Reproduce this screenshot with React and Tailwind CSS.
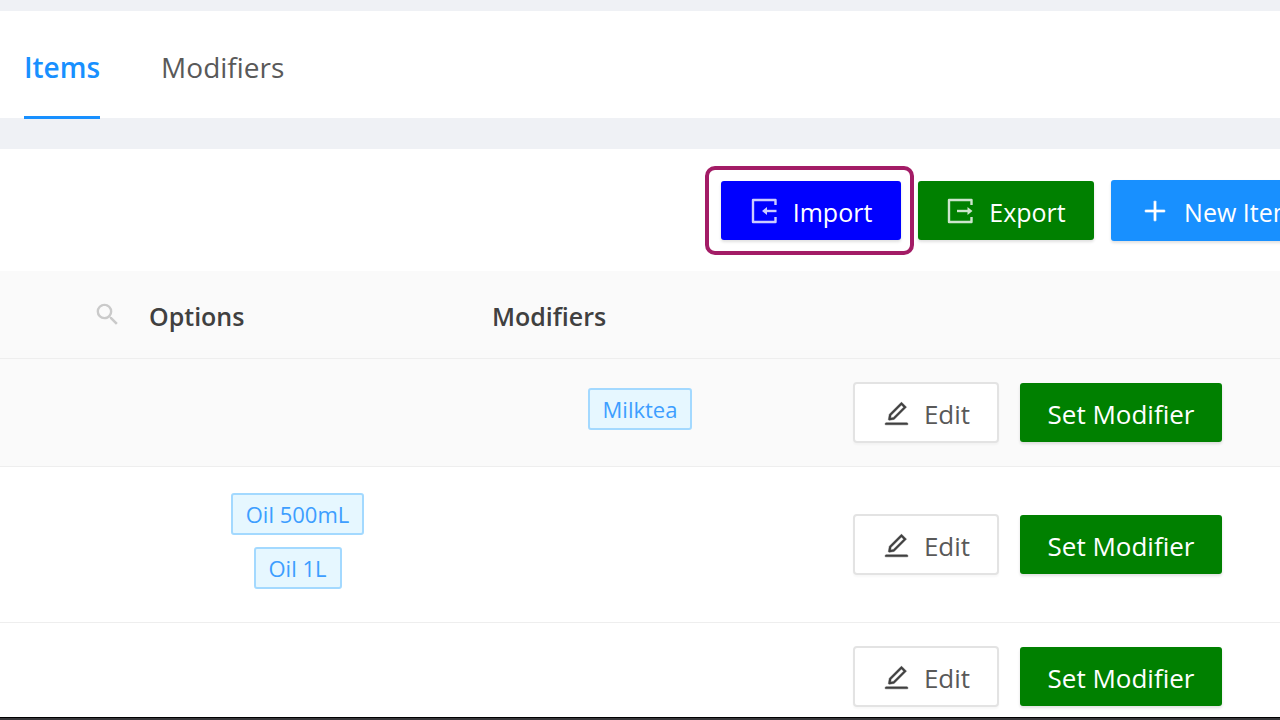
import { AiOutlineEdit, AiOutlinePlus } from 'react-icons/ai';
import { MdSearch } from 'react-icons/md';

const TABS = ['Items', 'Modifiers'];

const ROWS = [
  { id: 1, options: [], modifiers: ['Milktea'], hovered: true },
  { id: 2, options: ['Oil 500mL', 'Oil 1L'], modifiers: [] },
  { id: 3, options: [], modifiers: [] },
];

export default function App() {
  return (
    <div className="h-screen flex flex-col overflow-hidden bg-[#eff1f5] pt-[11px] font-['Open_Sans','Noto_Sans',sans-serif] text-[26px] text-[#595959]">
      <Tabs active="Items" />

      <main className="flex-1 min-h-0 mt-[31px] overflow-hidden bg-white">
        <Toolbar />
        <ItemsTable rows={ROWS} />
      </main>

      <div className="h-[3px] shrink-0 border-t border-black bg-[#38373a]" />
    </div>
  );
}

function Tabs({ active }) {
  return (
    <nav className="flex h-[107px] shrink-0 gap-[61px] bg-white pl-6 text-[28px]">
      {TABS.map((tab) => (
        <button
          key={tab}
          type="button"
          className={
            tab === active
              ? 'h-[108px] border-b-3 border-[#1890ff] pt-[7px] font-semibold text-[#1890ff]'
              : 'h-[108px] pt-1'
          }
        >
          {tab}
        </button>
      ))}
    </nav>
  );
}

function Toolbar() {
  return (
    <div className="-mr-[46px] flex h-[122px] items-center justify-end gap-[17px] text-[25px]">
      <div className="relative">
        <ActionButton icon={<ImportIcon />} className="h-[59px] w-[180px] bg-[#0000ff]">
          Import
        </ActionButton>
        {/* Highlight around the import action */}
        <div className="pointer-events-none absolute -left-4 -right-[13px] -inset-y-[15px] rounded-[10px] border-4 border-[#a31c66]" />
      </div>
      <ActionButton icon={<ExportIcon />} className="h-[59px] w-[176px] bg-[#008000]">
        Export
      </ActionButton>
      <ActionButton
        icon={<AiOutlinePlus strokeWidth={24} className="size-7" />}
        className="h-[61px] w-[215px] bg-[#1890ff]"
      >
        New Item
      </ActionButton>
    </div>
  );
}

function ImportIcon() {
  return (
    <svg viewBox="0 0 28 28" className="size-7 opacity-80" fill="none" stroke="currentColor" strokeWidth="2.4">
      <path d="M25.5 8V3H3v22h22.5v-5" strokeLinejoin="round" />
      <path d="M26.5 14H16" />
      <path d="M12 14l5-4v8z" fill="currentColor" stroke="none" />
    </svg>
  );
}

function ExportIcon() {
  return (
    <svg viewBox="0 0 28 28" className="size-7 opacity-80" fill="none" stroke="currentColor" strokeWidth="2.4">
      <path d="M25.5 8V3H3v22h22.5v-5" strokeLinejoin="round" />
      <path d="M11 14h11" />
      <path d="M26.5 14l-5-4v8z" fill="currentColor" stroke="none" />
    </svg>
  );
}

function ActionButton({ icon, className, children }) {
  return (
    <button
      type="button"
      className={`flex items-center justify-center gap-[15px] whitespace-nowrap rounded-[3px] pt-0.5 text-white shadow-[0_2px_3px_rgba(0,0,0,0.12)] ${className}`}
    >
      {icon}
      <span className="pt-1">{children}</span>
    </button>
  );
}

function ItemsTable({ rows }) {
  return (
    <table className="w-full table-fixed border-separate border-spacing-0">
      <colgroup>
        <col className="w-[126px]" />
        <col className="w-[343px]" />
        <col className="w-[342px]" />
        <col />
      </colgroup>
      <thead>
        <tr className="h-[88px] bg-[#fafafa] text-left text-[25px] text-[#404040]">
          <th className="border-b border-[#eeeeee] pr-1">
            <button type="button" aria-label="Search" className="ml-auto block text-[#cacaca]">
              <MdSearch className="size-[29px]" />
            </button>
          </th>
          <th className="border-b border-[#eeeeee] px-[23px] pt-1 font-semibold">Options</th>
          <th className="border-b border-[#eeeeee] px-[23px] pt-1 font-semibold">Modifiers</th>
          <th className="border-b border-[#eeeeee]" />
        </tr>
      </thead>
      <tbody>
        {rows.map((row) => (
          <tr key={row.id} className={row.hovered ? 'bg-[#fafafa]' : 'bg-white'}>
            <td className="border-b border-[#eeeeee]" />
            <td className="border-b border-[#eeeeee] px-[23px] py-[26px]">
              <TagList tags={row.options} />
            </td>
            <td className="border-b border-[#eeeeee] px-[23px] py-[26px]">
              <TagList tags={row.modifiers} />
            </td>
            <td className="border-b border-[#eeeeee] py-[23px] pl-[42px]">
              <div className="flex items-center gap-[21px]">
                <button
                  type="button"
                  className="flex h-[61px] w-[146px] items-center justify-center gap-[13px] rounded-[4px] border-2 border-[#e3e3e3] bg-white pt-0.5 shadow-[0_2px_2px_rgba(0,0,0,0.03)]"
                >
                  <AiOutlineEdit strokeWidth={14} className="size-[29px] text-[#404040]" />
                  <span className="pt-0.5">Edit</span>
                </button>
                <button
                  type="button"
                  className="h-[59px] w-[202px] whitespace-nowrap rounded-[3px] bg-[#008000] pt-1 text-white shadow-[0_2px_3px_rgba(0,0,0,0.12)]"
                >
                  Set Modifier
                </button>
              </div>
            </td>
          </tr>
        ))}
      </tbody>
    </table>
  );
}

function TagList({ tags }) {
  if (tags.length === 0) return null;

  return (
    <div className="flex flex-col items-center gap-3 pb-[7px]">
      {tags.map((tag) => (
        <span
          key={tag}
          className="flex h-[42px] items-center whitespace-nowrap rounded-[3px] border-2 border-[#a3d9ff] bg-[#e6f7ff] px-[13px] text-[22px] text-[#3d9eff]"
        >
          {tag}
        </span>
      ))}
    </div>
  );
}
